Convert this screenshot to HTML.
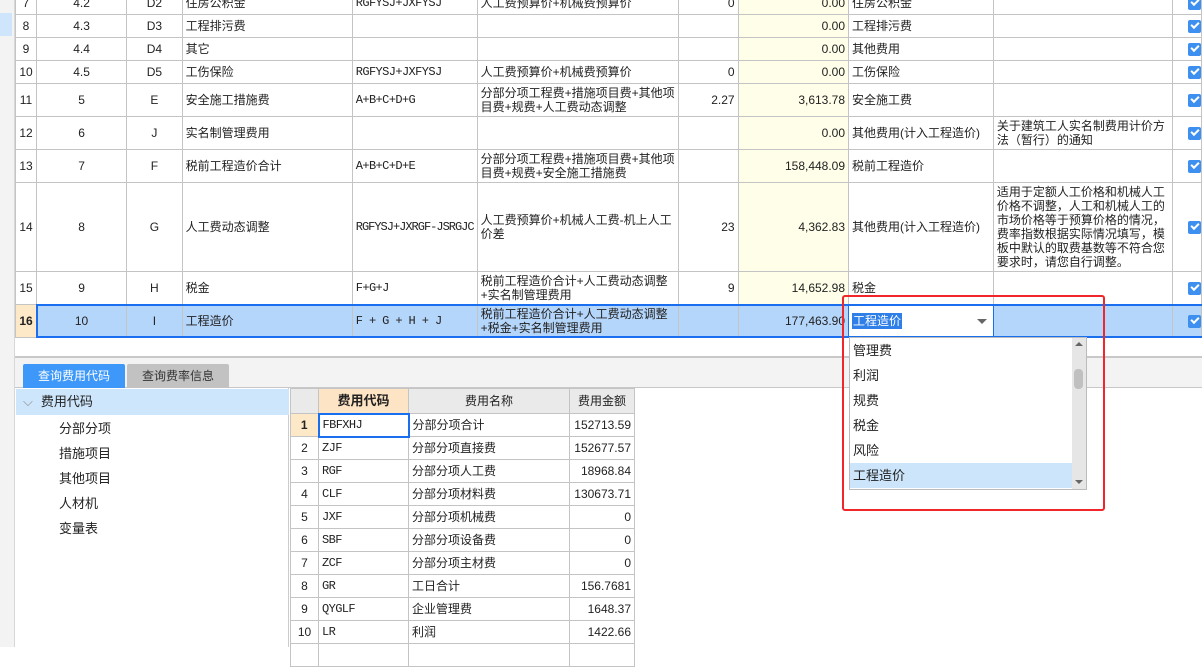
<!DOCTYPE html>
<html><head><meta charset="utf-8"><style>
*{margin:0;padding:0;box-sizing:border-box}
body{width:1202px;height:647px;overflow:hidden;background:#fff;position:relative;font-family:"Liberation Sans","Noto Sans CJK SC",sans-serif;font-size:12px;color:#222}
.abs{position:absolute}
#strip{left:0;top:0;width:15px;height:647px;background:#f3f3f3;border-right:1px solid #d8d8d8}
table{border-collapse:collapse;table-layout:fixed;position:absolute}
td{border:1px solid #c4c4c4;padding:0 3px;overflow:hidden;line-height:14px;vertical-align:middle;white-space:nowrap}
#t1{left:15px;top:-9px}
#t1 td.c{text-align:center}
#t1 td.r{text-align:right}
#t1 td.y{background:#fefee9}
#t1 td.w{white-space:normal}
.mono{font-family:"Liberation Mono","Noto Sans CJK SC",monospace;font-size:12px;letter-spacing:-0.6px}
.cb{display:inline-block;width:13px;height:13px;background:#3d8ff0;border-radius:2px;position:relative;vertical-align:middle}
.cb:after{content:"";position:absolute;left:3px;top:2px;width:6px;height:3px;border-left:2px solid #fff;border-bottom:2px solid #fff;transform:rotate(-45deg)}
#t1 td.k{padding:0 0 0 15px}
tr.sel td{background:#b5d6fb}
#t2{left:290px;top:388px}
#t2 td{height:23px}
</style></head><body>
<div id="strip" class="abs"></div>
<div class="abs" style="left:0;top:13px;width:12px;height:23px;background:#cfe5fb"></div>
<table id="t1">
<colgroup><col style="width:21px"><col style="width:91px"><col style="width:56px"><col style="width:171px"><col style="width:121px"><col style="width:202px"><col style="width:60px"><col style="width:111px"><col style="width:145px"><col style="width:181px"><col style="width:28px"></colgroup>
<tr style="height:23px"><td class="c">7</td><td class="c">4.2</td><td class="c">D2</td><td>住房公积金</td><td class="mono">RGFYSJ+JXFYSJ</td><td>人工费预算价+机械费预算价</td><td class="r">0</td><td class="r y">0.00</td><td>住房公积金</td><td></td><td class="k"><span class="cb"></span></td></tr>
<tr style="height:23px"><td class="c">8</td><td class="c">4.3</td><td class="c">D3</td><td>工程排污费</td><td></td><td></td><td></td><td class="r y">0.00</td><td>工程排污费</td><td></td><td class="k"><span class="cb"></span></td></tr>
<tr style="height:23px"><td class="c">9</td><td class="c">4.4</td><td class="c">D4</td><td>其它</td><td></td><td></td><td></td><td class="r y">0.00</td><td>其他费用</td><td></td><td class="k"><span class="cb"></span></td></tr>
<tr style="height:23px"><td class="c">10</td><td class="c">4.5</td><td class="c">D5</td><td>工伤保险</td><td class="mono">RGFYSJ+JXFYSJ</td><td>人工费预算价+机械费预算价</td><td class="r">0</td><td class="r y">0.00</td><td>工伤保险</td><td></td><td class="k"><span class="cb"></span></td></tr>
<tr style="height:33px"><td class="c">11</td><td class="c">5</td><td class="c">E</td><td>安全施工措施费</td><td class="mono">A+B+C+D+G</td><td class="w">分部分项工程费+措施项目费+其他项目费+规费+人工费动态调整</td><td class="r">2.27</td><td class="r y">3,613.78</td><td>安全施工费</td><td></td><td class="k"><span class="cb"></span></td></tr>
<tr style="height:33px"><td class="c">12</td><td class="c">6</td><td class="c">J</td><td>实名制管理费用</td><td></td><td></td><td></td><td class="r y">0.00</td><td>其他费用(计入工程造价)</td><td class="w">关于建筑工人实名制费用计价方法（暂行）的通知</td><td class="k"><span class="cb"></span></td></tr>
<tr style="height:33px"><td class="c">13</td><td class="c">7</td><td class="c">F</td><td>税前工程造价合计</td><td class="mono">A+B+C+D+E</td><td class="w">分部分项工程费+措施项目费+其他项目费+规费+安全施工措施费</td><td></td><td class="r y">158,448.09</td><td>税前工程造价</td><td></td><td class="k"><span class="cb"></span></td></tr>
<tr style="height:89px"><td class="c">14</td><td class="c">8</td><td class="c">G</td><td>人工费动态调整</td><td class="mono" style="letter-spacing:-1px">RGFYSJ+JXRGF-JSRGJC</td><td class="w">人工费预算价+机械人工费-机上人工价差</td><td class="r">23</td><td class="r y">4,362.83</td><td>其他费用(计入工程造价)</td><td class="w">适用于定额人工价格和机械人工价格不调整，人工和机械人工的市场价格等于预算价格的情况，费率指数根据实际情况填写，模板中默认的取费基数等不符合您要求时，请您自行调整。</td><td class="k"><span class="cb"></span></td></tr>
<tr style="height:33px"><td class="c">15</td><td class="c">9</td><td class="c">H</td><td>税金</td><td class="mono">F+G+J</td><td class="w">税前工程造价合计+人工费动态调整+实名制管理费用</td><td class="r">9</td><td class="r y">14,652.98</td><td>税金</td><td></td><td class="k"><span class="cb"></span></td></tr>
<tr class="sel" style="height:33px"><td class="c" style="background:#fde8c8;font-weight:bold">16</td><td class="c">10</td><td class="c">I</td><td>工程造价</td><td class="mono">F + G + H + J</td><td class="w">税前工程造价合计+人工费动态调整+税金+实名制管理费用</td><td></td><td class="r">177,463.90</td><td style="background:#fff"></td><td></td><td class="k"><span class="cb"></span></td></tr>
</table>
<div class="abs" style="left:36px;top:304px;width:1166px;height:34px;border:2px solid #1a6ef0;border-right:none"></div>
<div class="abs" style="left:848px;top:305px;width:146px;height:32px;border:1px solid #1a6ef0;background:#fff"></div>
<div class="abs" style="left:852px;top:313px;height:16px;line-height:16px;background:#2f7fe8;color:#fff;padding:0 1px">工程造价</div>
<div class="abs" style="left:977px;top:319px;width:0;height:0;border-left:5px solid transparent;border-right:5px solid transparent;border-top:5px solid #666"></div>
<div class="abs" style="left:15px;top:356px;width:1187px;height:2px;background:#c8c8c8"></div>
<div class="abs" style="left:15px;top:358px;width:1187px;height:30px;background:#f3f3f3;border-bottom:1px solid #c8c8c8"></div>
<div class="abs" style="left:23px;top:364px;width:102px;height:24px;background:#3d98fa;color:#fff;text-align:center;line-height:24px;border-radius:2px 2px 0 0">查询费用代码</div>
<div class="abs" style="left:127px;top:364px;width:102px;height:24px;background:#c2c2c2;color:#333;text-align:center;line-height:24px;border-radius:2px 2px 0 0">查询费率信息</div>
<div class="abs" style="left:15px;top:388px;width:274px;height:259px;background:#fff;border-right:1px solid #ccc"></div>
<div class="abs" style="left:16px;top:389px;width:273px;height:26px;background:#cde6fb;line-height:26px;font-size:13px"><span style="color:#888;padding:0 8px 0 7px">⌵</span>费用代码</div>
<div class="abs" style="left:59px;top:416px;line-height:25px;font-size:13px">分部分项<br>措施项目<br>其他项目<br>人材机<br>变量表</div>
<table id="t2">
<colgroup><col style="width:28px"><col style="width:90px"><col style="width:161px"><col style="width:65px"></colgroup>
<tr style="background:#eaeaea"><td style="height:25px"></td><td style="background:#fde4c4;text-align:center;font-weight:bold;font-size:13px">费用代码</td><td style="text-align:center">费用名称</td><td style="text-align:center">费用金额</td></tr>
<tr><td style="background:#fde8c8;text-align:center;font-weight:bold">1</td><td class="mono" style="border:2px solid #1a6ef0">FBFXHJ</td><td>分部分项合计</td><td style="text-align:right">152713.59</td></tr>
<tr><td style="text-align:center">2</td><td class="mono">ZJF</td><td>分部分项直接费</td><td style="text-align:right">152677.57</td></tr>
<tr><td style="text-align:center">3</td><td class="mono">RGF</td><td>分部分项人工费</td><td style="text-align:right">18968.84</td></tr>
<tr><td style="text-align:center">4</td><td class="mono">CLF</td><td>分部分项材料费</td><td style="text-align:right">130673.71</td></tr>
<tr><td style="text-align:center">5</td><td class="mono">JXF</td><td>分部分项机械费</td><td style="text-align:right">0</td></tr>
<tr><td style="text-align:center">6</td><td class="mono">SBF</td><td>分部分项设备费</td><td style="text-align:right">0</td></tr>
<tr><td style="text-align:center">7</td><td class="mono">ZCF</td><td>分部分项主材费</td><td style="text-align:right">0</td></tr>
<tr><td style="text-align:center">8</td><td class="mono">GR</td><td>工日合计</td><td style="text-align:right">156.7681</td></tr>
<tr><td style="text-align:center">9</td><td class="mono">QYGLF</td><td>企业管理费</td><td style="text-align:right">1648.37</td></tr>
<tr><td style="text-align:center">10</td><td class="mono">LR</td><td>利润</td><td style="text-align:right">1422.66</td></tr>
<tr><td></td><td></td><td></td><td></td></tr>
</table>
<div class="abs" style="left:849px;top:337px;width:238px;height:153px;background:#fff;border:1px solid #bbb"></div>
<div class="abs" style="left:853px;top:338px;line-height:25px;font-size:13px">管理费<br>利润<br>规费<br>税金<br>风险</div>
<div class="abs" style="left:850px;top:463px;width:222px;height:25px;background:#cce5fb;line-height:25px;padding-left:3px;font-size:13px">工程造价</div>
<div class="abs" style="left:1072px;top:338px;width:14px;height:151px;background:#e6e6e6"></div>
<div class="abs" style="left:1074px;top:369px;width:9px;height:20px;background:#c0c0c0;border-radius:4px"></div>
<div class="abs" style="left:1075px;top:342px;width:0;height:0;border-left:4px solid transparent;border-right:4px solid transparent;border-bottom:4px solid #666"></div>
<div class="abs" style="left:1075px;top:480px;width:0;height:0;border-left:4px solid transparent;border-right:4px solid transparent;border-top:4px solid #666"></div>
<div class="abs" style="left:842px;top:295px;width:263px;height:216px;border:2px solid #f0262a;border-radius:3px"></div>
</body></html>
